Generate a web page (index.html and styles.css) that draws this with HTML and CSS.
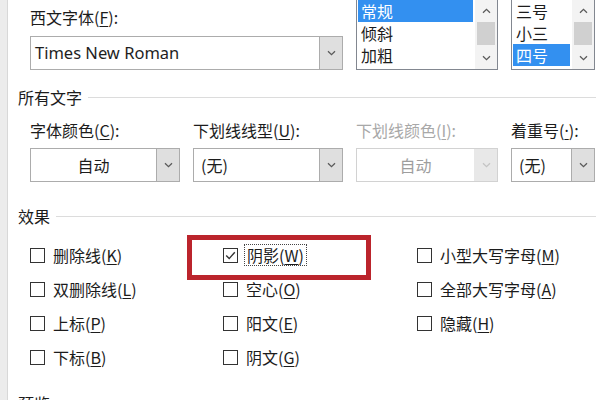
FILE: index.html
```html
<!DOCTYPE html>
<html lang="zh-CN">
<head>
<meta charset="utf-8">
<title>字体</title>
<link rel="stylesheet" href="styles.css">
</head>
<body>
<div class="dialog">
  <div class="edge"></div>
  <div class="main">
    <div class="grid4 font-row">
      <div class="field span2">
        <div class="label">西文字体(<u>F</u>):</div>
        <div class="combo">
          <div class="value latin">Times New Roman</div>
          <div class="arrow"><svg width="9" height="6" viewBox="0 0 9 6"><polyline points="1,1.2 4.5,4.6 8,1.2" fill="none" stroke="#5a5a5a" stroke-width="1.3"/></svg></div>
        </div>
      </div>
      <div class="list">
        <div class="items">
          <div class="item sel">常规</div>
          <div class="item">倾斜</div>
          <div class="item">加粗</div>
        </div>
        <div class="scroll">
          <div class="sarrow"><svg width="9" height="6" viewBox="0 0 9 6"><polyline points="1,4.8 4.5,1.4 8,4.8" fill="none" stroke="#5a5a5a" stroke-width="1.3"/></svg></div>
          <div class="thumb"></div>
          <div class="sarrow"><svg width="9" height="6" viewBox="0 0 9 6"><polyline points="1,1.2 4.5,4.6 8,1.2" fill="none" stroke="#5a5a5a" stroke-width="1.3"/></svg></div>
        </div>
      </div>
      <div class="list">
        <div class="items">
          <div class="item">三号</div>
          <div class="item">小三</div>
          <div class="item sel">四号</div>
        </div>
        <div class="scroll">
          <div class="sarrow"><svg width="9" height="6" viewBox="0 0 9 6"><polyline points="1,4.8 4.5,1.4 8,4.8" fill="none" stroke="#5a5a5a" stroke-width="1.3"/></svg></div>
          <div class="thumb"></div>
          <div class="sarrow"><svg width="9" height="6" viewBox="0 0 9 6"><polyline points="1,1.2 4.5,4.6 8,1.2" fill="none" stroke="#5a5a5a" stroke-width="1.3"/></svg></div>
        </div>
      </div>
    </div>

    <div class="section first"><span>所有文字</span><i class="rule"></i></div>

    <div class="grid4 all-text">
      <div class="field">
        <div class="label">字体颜色(<u>C</u>):</div>
        <div class="combo">
          <div class="value center">自动</div>
          <div class="arrow"><svg width="9" height="6" viewBox="0 0 9 6"><polyline points="1,1.2 4.5,4.6 8,1.2" fill="none" stroke="#5a5a5a" stroke-width="1.3"/></svg></div>
        </div>
      </div>
      <div class="field">
        <div class="label">下划线线型(<u>U</u>):</div>
        <div class="combo">
          <div class="value">(无)</div>
          <div class="arrow"><svg width="9" height="6" viewBox="0 0 9 6"><polyline points="1,1.2 4.5,4.6 8,1.2" fill="none" stroke="#5a5a5a" stroke-width="1.3"/></svg></div>
        </div>
      </div>
      <div class="field disabled">
        <div class="label">下划线颜色(<u>I</u>):</div>
        <div class="combo">
          <div class="value center">自动</div>
          <div class="arrow"><svg width="9" height="6" viewBox="0 0 9 6"><polyline points="1,1.2 4.5,4.6 8,1.2" fill="none" stroke="#c4c4c4" stroke-width="1.3"/></svg></div>
        </div>
      </div>
      <div class="field">
        <div class="label">着重号(<u class="dot">·</u>):</div>
        <div class="combo">
          <div class="value">(无)</div>
          <div class="arrow"><svg width="9" height="6" viewBox="0 0 9 6"><polyline points="1,1.2 4.5,4.6 8,1.2" fill="none" stroke="#5a5a5a" stroke-width="1.3"/></svg></div>
        </div>
      </div>
    </div>

    <div class="section effects-title"><span>效果</span><i class="rule"></i></div>

    <div class="effects">
      <div class="check"><span class="box"></span><span>删除线(<u>K</u>)</span></div>
      <div class="check"><span class="box"></span><span>双删除线(<u>L</u>)</span></div>
      <div class="check"><span class="box"></span><span>上标(<u>P</u>)</span></div>
      <div class="check"><span class="box"></span><span>下标(<u>B</u>)</span></div>

      <div class="check hl"><span class="box"><svg width="13" height="13" viewBox="0 0 13 13"><polyline points="2.2,6.6 5.2,9.6 10.8,3.2" fill="none" stroke="#333" stroke-width="1.4"/></svg></span><span class="focus">阴影(<u>W</u>)</span><span class="redbox"></span></div>
      <div class="check"><span class="box"></span><span>空心(<u>O</u>)</span></div>
      <div class="check"><span class="box"></span><span>阳文(<u>E</u>)</span></div>
      <div class="check"><span class="box"></span><span>阴文(<u>G</u>)</span></div>

      <div class="check"><span class="box"></span><span>小型大写字母(<u>M</u>)</span></div>
      <div class="check"><span class="box"></span><span>全部大写字母(<u>A</u>)</span></div>
      <div class="check"><span class="box"></span><span>隐藏(<u>H</u>)</span></div>
    </div>

    <div class="section preview-title"><span>预览</span><i class="rule"></i></div>
  </div>
</div>
</body>
</html>
```
FILE: styles.css
```css
* { box-sizing: border-box; }

body {
  margin: 0;
  background: #ffffff;
  font-family: "Noto Sans CJK SC", "Noto Sans", sans-serif;
  font-size: 16px;
  color: #1c1c1c;
}

u { text-decoration-thickness: 1px; text-underline-offset: 2px; }

u.dot { font-family: "Noto Sans", sans-serif; }

.dialog {
  display: flex;
  width: 600px;
  height: 400px;
  overflow: hidden;
}

.edge {
  flex: none;
  width: 8px;
  background: #ececec;
  border-right: 1px solid #d8d8d8;
}

.main {
  flex: 1;
  padding: 0 4px 0 10px;
}

.grid4 {
  display: grid;
  grid-template-columns: 150px 150px 142px 84px;
  column-gap: 13px;
  margin-left: 12px;
}

.font-row { height: 70px; }

.span2 { grid-column: span 2; }

.label {
  line-height: 20px;
  height: 20px;
  white-space: nowrap;
}

.font-row .label { margin-top: 7px; }

.combo {
  display: flex;
  height: 34px;
  margin-top: 9px;
  border: 1px solid #acacac;
  background: #fff;
}

.all-text .combo { margin-top: 8px; }

.value {
  flex: 1;
  padding: 0 7px;
  line-height: 32px;
  white-space: nowrap;
}

.value.center { text-align: center; }

.value.latin {
  font-family: "Noto Sans", sans-serif;
  font-size: 16.5px;
  padding-left: 4px;
  color: #1e1e1e;
}

.arrow {
  flex: none;
  width: 23px;
  background: #dfdfdf;
  border-left: 1px solid #acacac;
  display: flex;
  align-items: center;
  justify-content: center;
}

.disabled .label { color: #a8a8a8; }
.disabled .combo { border-color: #d2d2d2; }
.disabled .value { color: #9e9e9e; }
.disabled .arrow { background: #e8e8e8; border-left-color: #e8e8e8; }

.list {
  display: flex;
  height: 70px;
  border: 1px solid #828790;
  border-top: none;
  background: #fff;
}

.items {
  flex: 1;
  padding-left: 1px;
  padding-right: 2px;
}

.item {
  height: 22px;
  line-height: 22px;
  padding-left: 3px;
  white-space: nowrap;
}

.item.sel {
  background: #3390f0;
  color: #ffffff;
}

.scroll {
  flex: none;
  width: 22px;
  display: flex;
  flex-direction: column;
  background: #f3f3f3;
}

.sarrow {
  height: 22px;
  display: flex;
  align-items: center;
  justify-content: center;
}

.thumb {
  height: 23px;
  margin: 0 2px;
  background: #d0d0d0;
}

.scroll .sarrow:last-child { margin-top: auto; }

.section {
  display: flex;
  align-items: center;
  gap: 6px;
  height: 20px;
  line-height: 20px;
}

.section .rule {
  flex: 1;
  height: 1px;
  background: #dcdcdc;
}

.section.first { margin-top: 17px; }
.all-text { margin-top: 13px; }
.effects-title { margin-top: 24px; }
.preview-title { margin-top: 19px; }

.effects {
  display: grid;
  grid-template-columns: 193px 194px 1fr;
  grid-template-rows: repeat(4, 34px);
  grid-auto-flow: column;
  margin: 12px 0 0 12px;
}

.check {
  display: flex;
  align-items: center;
  gap: 8px;
  line-height: 20px;
  white-space: nowrap;
}

.box {
  flex: none;
  width: 15px;
  height: 15px;
  border: 1px solid #333333;
  background: #fff;
  display: flex;
  align-items: center;
  justify-content: center;
}

.focus {
  border: 1px dotted #444;
  padding: 0 2px;
  margin-left: -2px;
}

.hl { position: relative; }

.redbox {
  position: absolute;
  left: -36px;
  top: -3px;
  width: 184px;
  height: 45px;
  border: 5px solid #bb242c;
}
```
